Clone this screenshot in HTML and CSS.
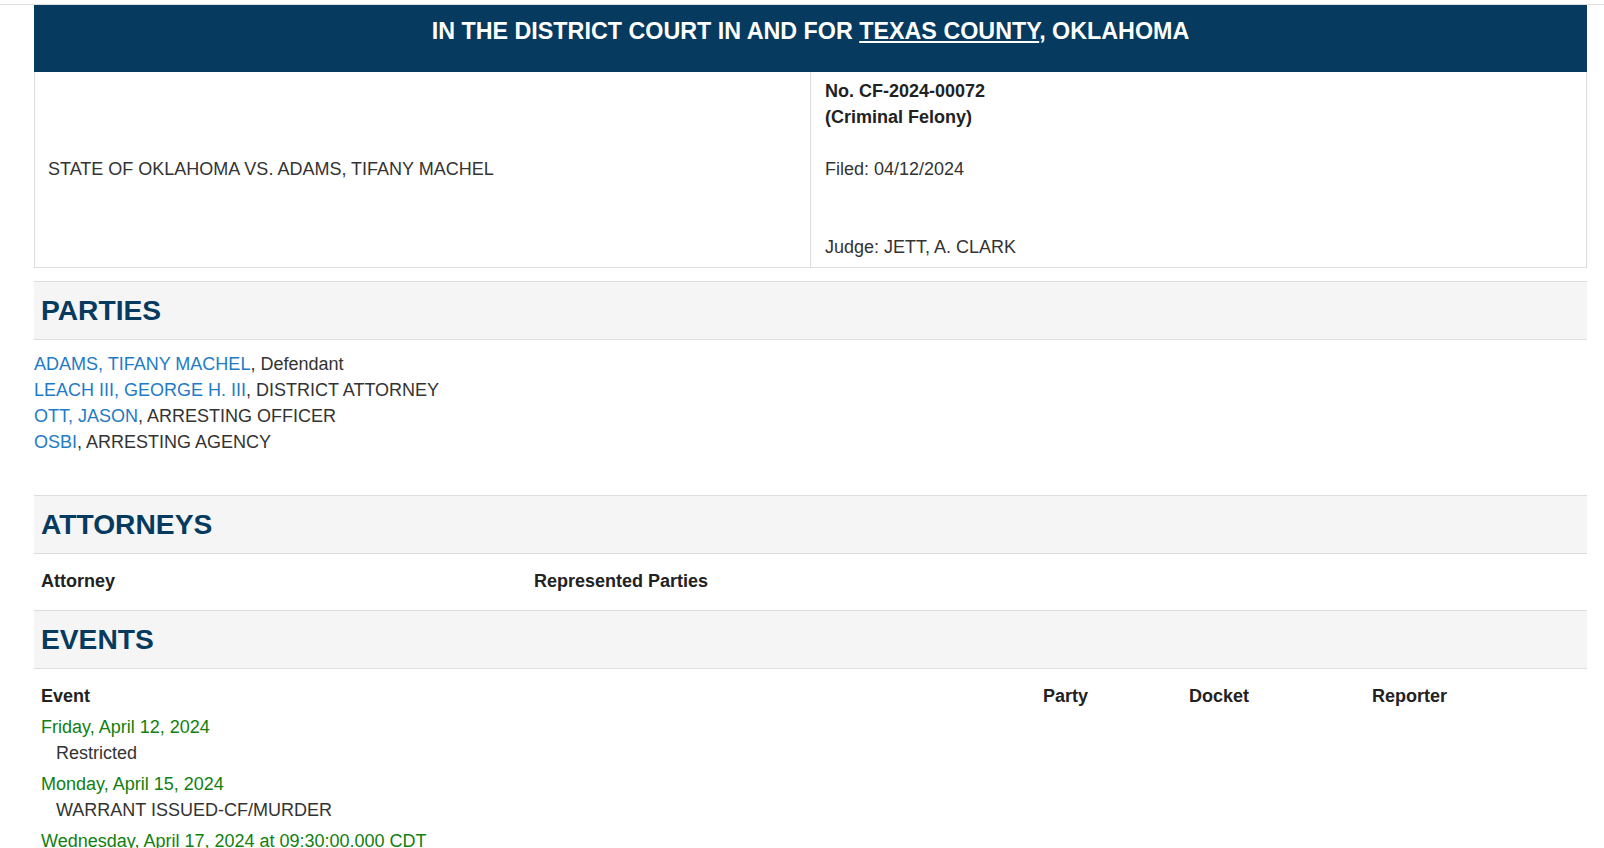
FILE: index.html
```html
<!DOCTYPE html>
<html lang="en">
<head>
<meta charset="utf-8">
<title>CF-2024-00072</title>
<link rel="stylesheet" href="styles.css">
</head>
<body>
<div class="topline"></div>
<div class="container">
  <div class="court-header">IN THE DISTRICT COURT IN AND FOR <a href="#">TEXAS COUNTY</a>, OKLAHOMA</div>
  <div class="caption">
    <div class="caption-style">STATE OF OKLAHOMA VS. ADAMS, TIFANY MACHEL</div>
    <div class="caption-info">
      <strong>No. CF-2024-00072<br>(Criminal Felony)</strong><br><br>Filed: 04/12/2024<br><br><br>Judge: JETT, A. CLARK
    </div>
  </div>

  <h2 class="section">PARTIES</h2>
  <p class="parties">
    <a href="#">ADAMS, TIFANY MACHEL</a>, Defendant<br>
    <a href="#">LEACH III, GEORGE H. III</a>, DISTRICT ATTORNEY<br>
    <a href="#">OTT, JASON</a>, ARRESTING OFFICER<br>
    <a href="#">OSBI</a>, ARRESTING AGENCY
  </p>

  <h2 class="section attorneys-title">ATTORNEYS</h2>
  <div class="attorneys-head">
    <div>Attorney</div>
    <div>Represented Parties</div>
  </div>

  <h2 class="section events-title">EVENTS</h2>
  <div class="events-head">
    <div>Event</div>
    <div>Party</div>
    <div>Docket</div>
    <div>Reporter</div>
  </div>
  <div class="event">
    <div class="event-date">Friday, April 12, 2024</div>
    <div class="event-desc">Restricted</div>
  </div>
  <div class="event">
    <div class="event-date">Monday, April 15, 2024</div>
    <div class="event-desc">WARRANT ISSUED-CF/MURDER</div>
  </div>
  <div class="event">
    <div class="event-date">Wednesday, April 17, 2024 at 09:30:00.000 CDT</div>
    <div class="event-desc">INITIAL APPEARANCE</div>
  </div>
</div>
</body>
</html>
```
FILE: styles.css
```css
html, body {
  margin: 0;
  padding: 0;
  background: #fff;
}
body {
  font-family: "Liberation Sans", Arial, Helvetica, sans-serif;
  font-size: 18px;
  line-height: 26px;
  color: #333;
}
a {
  color: #1f7bc6;
  text-decoration: none;
}
.topline {
  height: 4px;
  border-bottom: 1px solid #ddd;
}
.container {
  margin-left: 34px;
  width: 1553px;
}
.court-header {
  background: #063a5f;
  color: #fff;
  text-align: center;
  font-weight: bold;
  font-size: 23.3px;
  line-height: 33px;
  padding: 10px 0 24px;
}
.court-header a {
  color: #fff;
  text-decoration: underline;
}
.caption {
  display: grid;
  grid-template-columns: 776px 1fr;
  border: 1px solid #ddd;
  border-top: 0;
  height: 196px;
  box-sizing: border-box;
}
.caption-style {
  display: flex;
  align-items: center;
  padding: 0 14px 2px 13px;
  border-right: 1px solid #ddd;
}
.caption-info {
  padding: 6px 14px 0;
}
.caption-info strong {
  color: #222;
}
.section {
  margin: 13px 0 0;
  background: #f5f5f5;
  border-top: 1px solid #ddd;
  border-bottom: 1px solid #ddd;
  color: #063a5f;
  font-size: 28.2px;
  font-weight: bold;
  line-height: 37px;
  padding: 10px 7px;
}
.parties {
  margin: 11px 0 0;
}
.attorneys-title {
  margin-top: 40px;
}
.attorneys-head {
  display: grid;
  grid-template-columns: 493px 1fr;
  padding: 14px 7px 16px;
  font-weight: bold;
  color: #222;
}
.events-title {
  margin-top: 0;
}
.events-head {
  display: grid;
  grid-template-columns: 1002px 146px 183px 1fr;
  padding: 14px 7px 0;
  font-weight: bold;
  color: #222;
}
.event {
  padding: 0 7px;
  margin-top: 5px;
}
.event:first-of-type {
  margin-top: 5px;
}
.event-date {
  color: #11800e;
}
.event-desc {
  padding-left: 15px;
}
```
